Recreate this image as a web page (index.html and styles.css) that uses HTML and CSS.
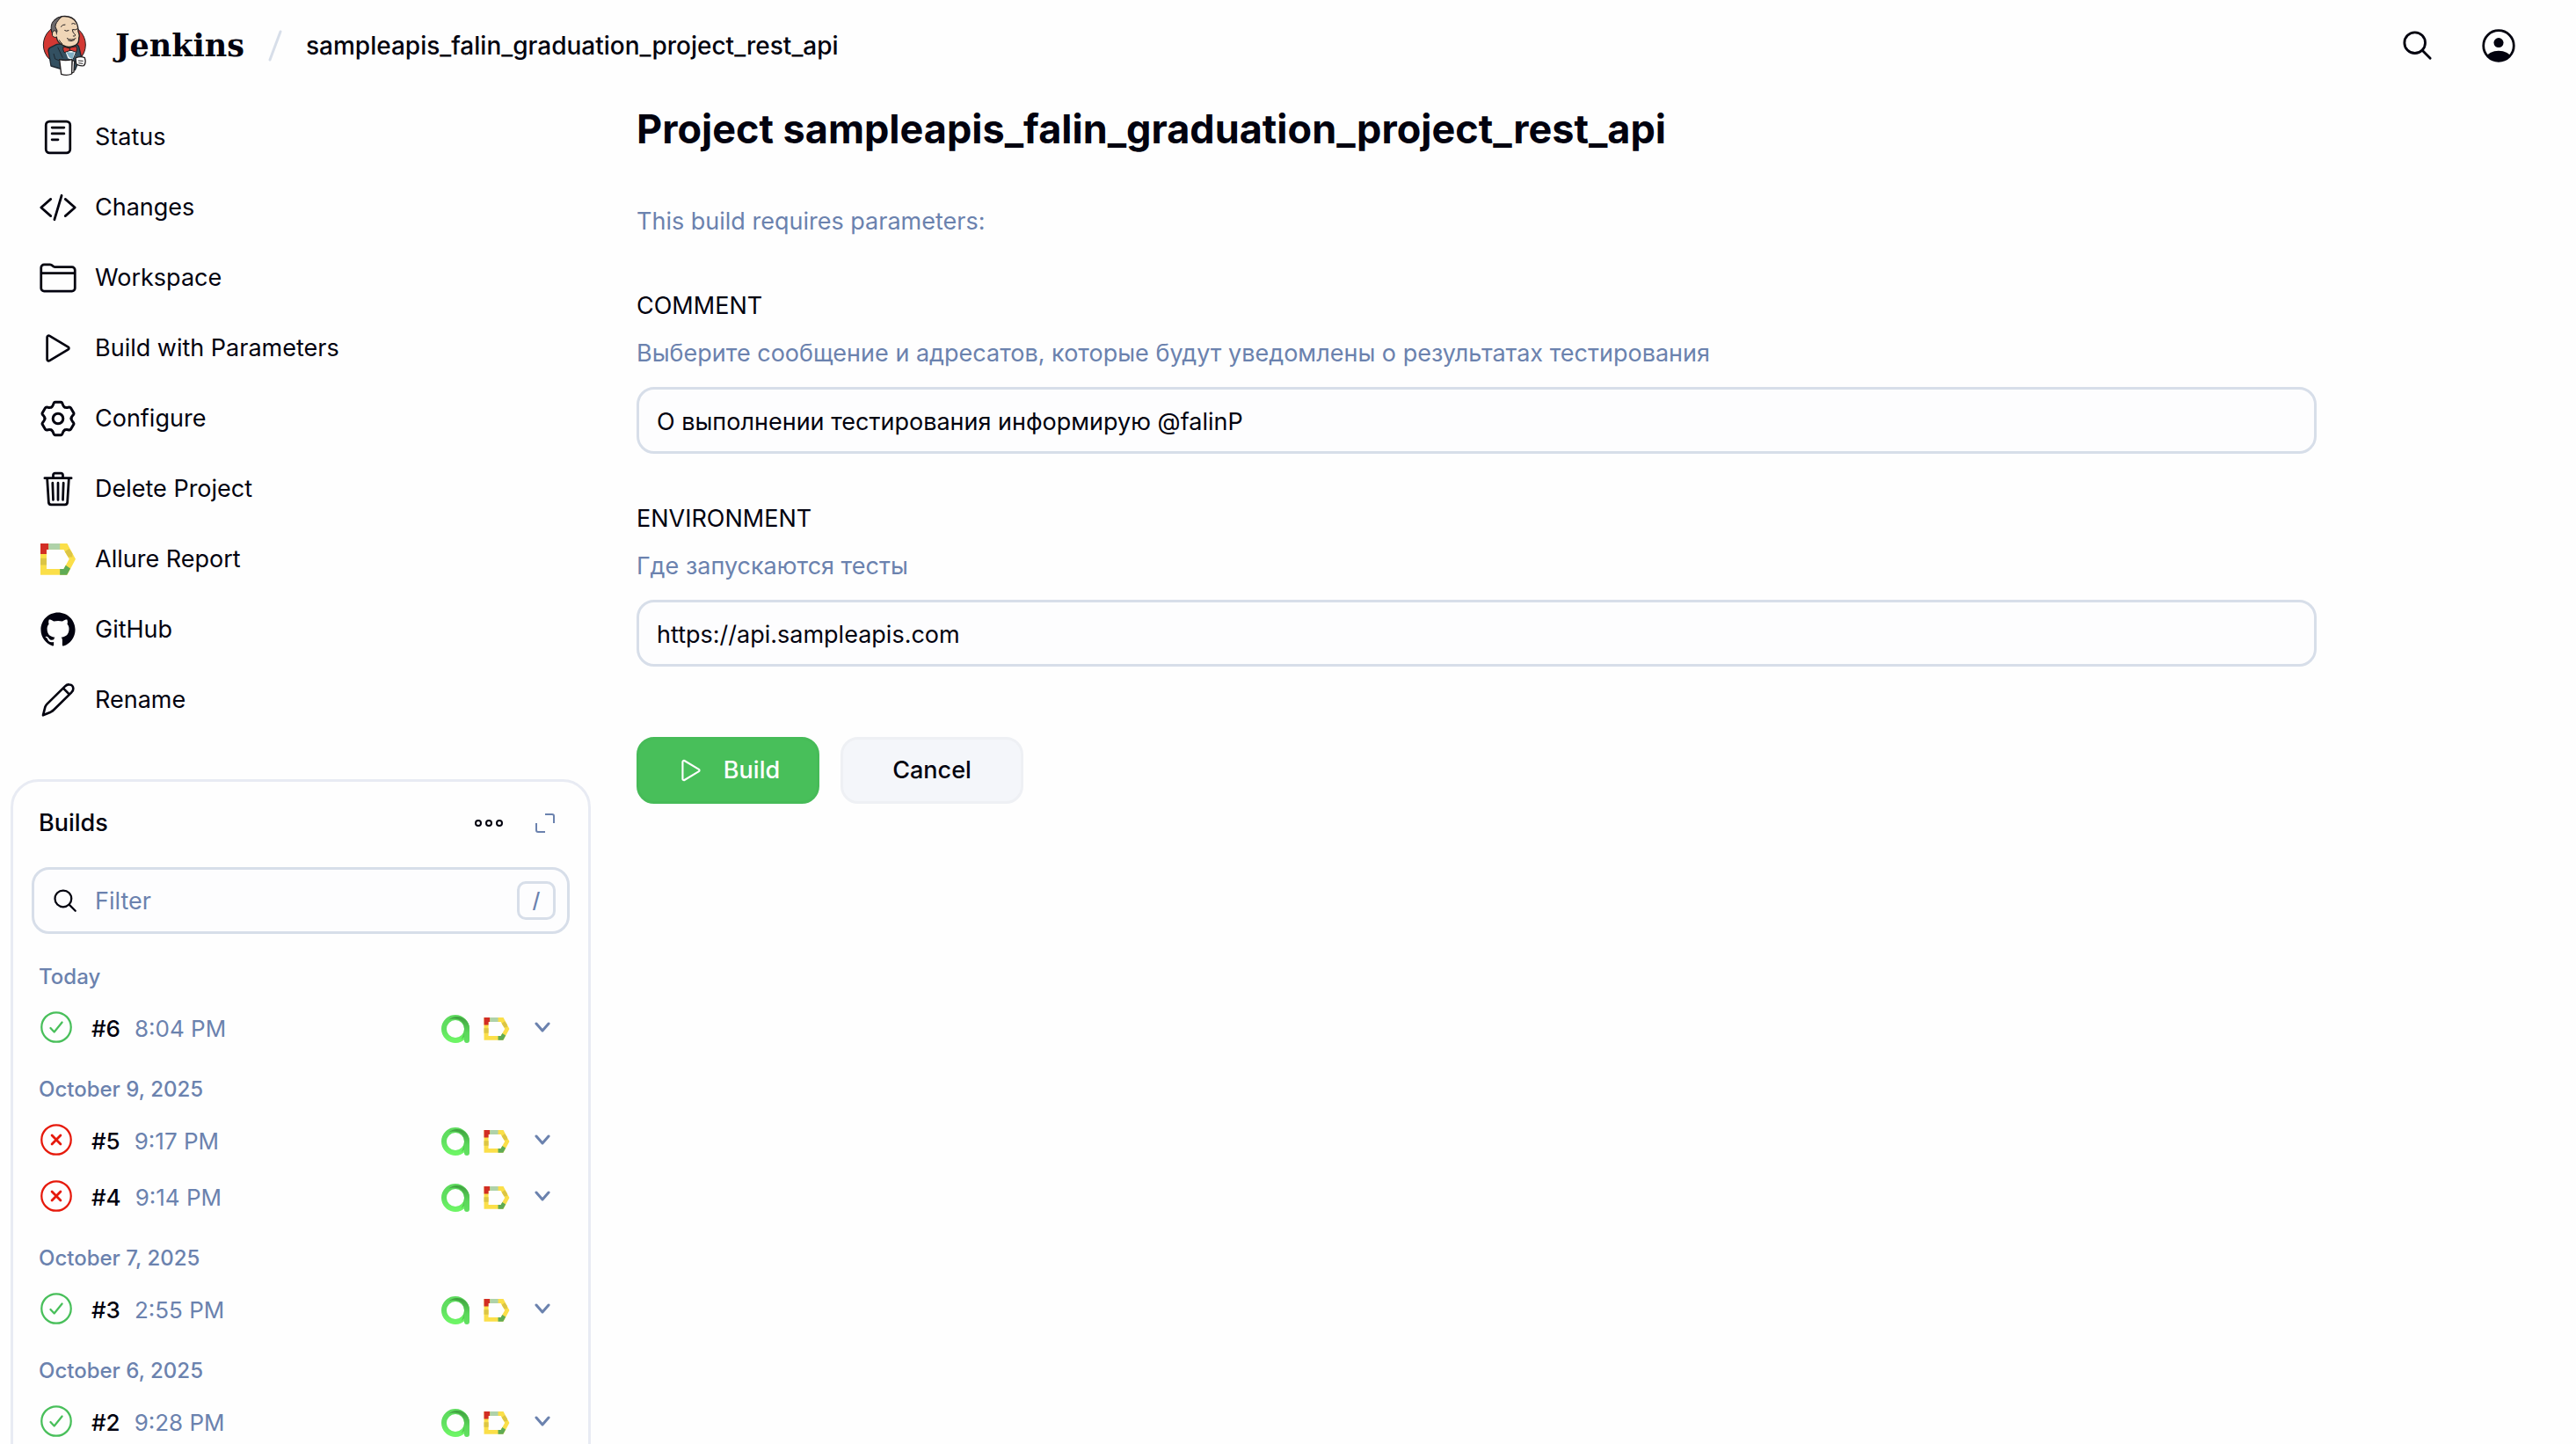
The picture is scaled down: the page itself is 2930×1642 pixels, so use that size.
FILE: index.html
```html
<!DOCTYPE html>
<html lang="en">
<head>
<meta charset="utf-8">
<title>sampleapis_falin_graduation_project_rest_api - Jenkins</title>
<link rel="stylesheet" href="styles.css">
</head>
<body>
<svg class="sprite" aria-hidden="true">
  <defs>
    <linearGradient id="ring" x1="0" y1="0" x2="0" y2="1">
      <stop offset="0" stop-color="#5edb5e"/><stop offset="0.5" stop-color="#60e060"/><stop offset="1" stop-color="#6df565"/>
    </linearGradient>
    <linearGradient id="stem" x1="0" y1="0" x2="0" y2="1">
      <stop offset="0" stop-color="#3f9f3f"/><stop offset="0.6" stop-color="#5bd75b"/><stop offset="1" stop-color="#62e062"/>
    </linearGradient>
    <clipPath id="face"><circle cx="486" cy="156" r="50"/></clipPath>
  </defs>
  <symbol id="allure" viewBox="137 174 121 109">
    <path fill="#fbdf49" fill-rule="evenodd" d="M137 174h92l29 54-29 54h-92zM158 195v67h59l19-34-19-33z"/>
    <path fill="#d22d24" d="M137 174h28v21h-7v15h-21z"/>
    <path fill="#afd2a9" d="M165 174h39v21h-39z"/>
    <path fill="#dcc544" d="M137 225h21v23h-21zM221 202l15-10 11 16v13h-14z"/>
    <path fill="#5fab54" d="M204 262h13l7-13 16 11-12 22h-24z"/>
  </symbol>
  <symbol id="testops" viewBox="69 75 96 96">
    <circle cx="117" cy="123" r="39" fill="none" stroke="url(#ring)" stroke-width="18"/>
    <path fill="url(#stem)" d="M94 92c20-22 71-12 71 30v40a9 9 0 0 1-18 0v-40c0-30-30-40-53-30z"/>
    <path fill="#53c94f" d="M147 128v22l-10 10q10-16 10-32z"/>
  </symbol>
  <symbol id="check" viewBox="0 0 512 512">
    <circle cx="256" cy="256" r="238" class="line"/>
    <path class="line" d="M350 178L223 334l-60-64"/>
  </symbol>
  <symbol id="cross" viewBox="0 0 512 512">
    <circle cx="256" cy="256" r="238" class="line"/>
    <path class="line thick" d="M326 186L186 326M186 186l140 140"/>
  </symbol>
  <symbol id="chevron" viewBox="0 0 18 12"><path class="line" d="M2 2l7 8 7-8"/></symbol>
  <symbol id="play" viewBox="0 0 512 512"><path class="line" d="M112 111v290c0 17.44 17 28.52 31 20.16l247.9-148.37c12.12-7.25 12.12-26.33 0-33.58L143 90.84c-14-8.36-31 2.72-31 20.16z"/></symbol>
  <symbol id="search" viewBox="0 0 36 36"><circle cx="14.500" cy="14.500" r="12.500" class="line"/><path class="line" d="M23.500 23.500L33 33"/></symbol>
</svg>

<header class="header">
  <a class="brand" href="#">
    <svg class="brand-logo" viewBox="54 50 153 210" aria-hidden="true">
      <ellipse cx="130" cy="152" rx="72" ry="70" fill="#d33833" stroke="#231f20" stroke-width="3"/>
      <path fill="#335061" stroke="#1d2730" stroke-width="4" stroke-linejoin="round" d="M104 150l-24 12q-7 4-4 14l8 48 30 9 52 5 12-30 10-12-8-34q-2-12-14-12l-16-4z"/>
      <path fill="#f7f7f7" d="M132 172l20-4 18 4-4 18-10 14-14-6z"/>
      <path fill="#81b0c4" d="M136 176l16 2 12-1-6 24-12-6z"/>
      <path fill="#f0d6b7" stroke="#231f20" stroke-width="4" d="M88 88Q92 60 122 55q34-4 48 20 7 12 7 32 6 12 2 22 2 22-19 27-18 8-34-2-22-10-23-29-16-2-15-20 0-12 4-17z"/>
      <path fill="#6d6b6d" stroke="#231f20" stroke-width="3" stroke-linejoin="round" d="M86 108q-5-24 6-37 12-13 30-16-13 10-18 20-6 8-5 16l6 13-3 14q-8-12-16-10z"/>
      <path fill="#f0d6b7" stroke="#231f20" stroke-width="3" d="M103 126q-14 2-15-10 0-12 8-13 8 0 7 11"/>
      <path fill="none" stroke="#231f20" stroke-width="3" stroke-linecap="round" d="M118 90q5-8 14-7M155 80q6-4 12 1M131 103q5 4 13 0M160 100q7 3 13-2M157 100q0 12 9 16 3 8-6 6M139 130q14 9 29 0M143 137q10 5 20-1M112 136q4 8 10 12"/>
      <path fill="#d33833" stroke="#231f20" stroke-width="3" stroke-linejoin="round" d="M126 158l22 6 4-3 18-4q6 9 0 20l-17-6-6 1-18 6q-6-9-3-20zM148 163v9"/>
      <path fill="#fff" stroke="#231f20" stroke-width="4" stroke-linejoin="round" d="M168 197q16-8 31-1 6 18-3 27-15 2-26-6zM156 205l8 2-2 38-10 4z"/>
      <path fill="none" stroke="#231f20" stroke-width="3" d="M177 206l17 1M178 214l15 2"/>
      <path fill="#fff" stroke="#231f20" stroke-width="4" stroke-linejoin="round" d="M113 202q21 5 43 0l-1 49q-17 8-36 1z"/>
      <path fill="none" stroke="#1d2730" stroke-width="3" d="M93 182l5 18 16 6M107 160l17 36M170 176l-10 24"/>
    </svg>
    <span class="brand-name">Jenkins</span>
  </a>
  <svg class="slash" viewBox="0 0 16 36" aria-hidden="true"><path d="M14 2L2 34"/></svg>
  <a class="crumb" href="#">sampleapis_falin_graduation_project_rest_api</a>
  <div class="header-actions">
    <button type="button" class="icon-button" aria-label="Search"><svg class="search-lg"><use href="#search"/></svg></button>
    <button type="button" class="icon-button" aria-label="User">
      <svg class="user" viewBox="431 101 110 110"><circle cx="486" cy="156" r="50" fill="none" stroke="currentColor" stroke-width="8"/><circle cx="486" cy="146" r="16" fill="currentColor"/><path clip-path="url(#face)" fill="currentColor" d="M436 212v-12q20-27 50-27t50 27v12z"/></svg>
    </button>
  </div>
</header>

<div class="layout">
  <aside class="sidebar">
    <nav class="tasks">
      <a class="task" href="#"><svg class="icon" viewBox="0 0 512 512"><rect class="line" x="96" y="48" width="320" height="416" rx="48"/><path class="line" d="M176 128h160M176 208h160M176 288h80"/></svg>Status</a>
      <a class="task" href="#"><svg class="icon" viewBox="0 0 512 512"><path class="line" d="M160 368L32 256l128-112M352 368l128-112-128-112M304 96l-96 320"/></svg>Changes</a>
      <a class="task" href="#"><svg class="icon" viewBox="0 0 512 512"><path class="line" d="M440 432H72a40 40 0 01-40-40V120a40 40 0 0140-40h75.890a40 40 0 0122.190 6.720l27.840 18.560a40 40 0 0022.190 6.720H440a40 40 0 0140 40v240a40 40 0 01-40 40zM32 192h448"/></svg>Workspace</a>
      <a class="task" href="#"><svg class="icon"><use href="#play"/></svg>Build with Parameters</a>
      <a class="task" href="#">
        <svg class="icon gear" viewBox="-22 -22 44 44">
          <defs><path id="tooth" d="M-7.500-13C-4.600-14.700-5.800-18.700-3.200-18.700H3.200C5.800-18.700 4.600-14.700 7.500-13"/></defs>
          <circle r="5.800"/><use href="#tooth"/><use href="#tooth" transform="rotate(60)"/><use href="#tooth" transform="rotate(120)"/><use href="#tooth" transform="rotate(180)"/><use href="#tooth" transform="rotate(240)"/><use href="#tooth" transform="rotate(300)"/>
        </svg>Configure</a>
      <a class="task" href="#"><svg class="icon" viewBox="0 0 512 512"><path class="line" d="M112 112l20 320c.950 18.490 14.400 32 32 32h184c17.670 0 30.870-13.510 32-32l20-320M80 112h352M192 112V72a23.930 23.930 0 0124-24h80a23.930 23.930 0 0124 24v40M256 176v224M184 176l8 224M328 176l-8 224"/></svg>Delete Project</a>
      <a class="task" href="#"><svg class="icon allure-lg"><use href="#allure"/></svg>Allure Report</a>
      <a class="task" href="#"><svg class="icon" viewBox="-1 -1 18 18"><path fill="currentColor" d="M8 0C3.580 0 0 3.580 0 8c0 3.540 2.290 6.530 5.470 7.590.4.070.55-.17.55-.38 0-.19-.01-.82-.01-1.490-2.010.37-2.530-.49-2.690-.94-.09-.23-.48-.94-.82-1.130-.28-.15-.68-.52-.01-.53.63-.01 1.080.58 1.230.82.72 1.210 1.870.87 2.330.66.070-.52.28-.87.51-1.070-1.780-.2-3.640-.89-3.640-3.950 0-.87.31-1.590.82-2.150-.08-.2-.36-1.020.08-2.120 0 0 .67-.21 2.200.82.64-.18 1.320-.27 2-.27s1.360.09 2 .27c1.530-1.040 2.200-.82 2.200-.82.44 1.100.16 1.920.08 2.120.51.56.82 1.270.82 2.150 0 3.070-1.870 3.750-3.650 3.950.29.25.54.73.54 1.480 0 1.070-.01 1.930-.01 2.200 0 .21.15.46.55.38A8.010 8.010 0 0016 8c0-4.420-3.580-8-8-8z"/></svg>GitHub</a>
      <a class="task" href="#"><svg class="icon pencil" viewBox="132 642 132 132"><path d="M147 760l7-28q2-6 7-11l61-60q7-7 14-6a14 14 0 0 1 14 14q0 8-6 13l-60 59q-5 5-11 8zM216 668l20 20"/></svg>Rename</a>
    </nav>

    <section class="builds">
      <div class="builds-head">
        <h2 class="builds-title">Builds</h2>
        <button type="button" class="icon-button" aria-label="More"><svg class="dots" viewBox="0 0 32 10"><circle cx="4" cy="5" r="3"/><circle cx="16" cy="5" r="3"/><circle cx="28" cy="5" r="3"/></svg></button>
        <a class="expand-link" href="#" aria-label="Expand"><svg class="expand" viewBox="0 0 24 24"><path d="M12 2h8q2 0 2 2v8M2 12v8q0 2 2 2h8"/></svg></a>
      </div>
      <label class="filter">
        <svg class="search-sm"><use href="#search"/></svg>
        <input class="filter-input" type="search" placeholder="Filter" aria-label="Filter">
        <kbd class="key">/</kbd>
      </label>

      <h3 class="day">Today</h3>
      <div class="build"><svg class="status ok"><use href="#check"/></svg><a class="num" href="#">#6</a><a class="time" href="#">8:04 PM</a><svg class="badge-a"><use href="#testops"/></svg><svg class="badge-d"><use href="#allure"/></svg><button type="button" class="icon-button" aria-label="Menu for #6"><svg class="chevron"><use href="#chevron"/></svg></button></div>
      <h3 class="day">October 9, 2025</h3>
      <div class="build"><svg class="status bad"><use href="#cross"/></svg><a class="num" href="#">#5</a><a class="time" href="#">9:17 PM</a><svg class="badge-a"><use href="#testops"/></svg><svg class="badge-d"><use href="#allure"/></svg><button type="button" class="icon-button" aria-label="Menu for #5"><svg class="chevron"><use href="#chevron"/></svg></button></div>
      <div class="build"><svg class="status bad"><use href="#cross"/></svg><a class="num" href="#">#4</a><a class="time" href="#">9:14 PM</a><svg class="badge-a"><use href="#testops"/></svg><svg class="badge-d"><use href="#allure"/></svg><button type="button" class="icon-button" aria-label="Menu for #4"><svg class="chevron"><use href="#chevron"/></svg></button></div>
      <h3 class="day">October 7, 2025</h3>
      <div class="build"><svg class="status ok"><use href="#check"/></svg><a class="num" href="#">#3</a><a class="time" href="#">2:55 PM</a><svg class="badge-a"><use href="#testops"/></svg><svg class="badge-d"><use href="#allure"/></svg><button type="button" class="icon-button" aria-label="Menu for #3"><svg class="chevron"><use href="#chevron"/></svg></button></div>
      <h3 class="day">October 6, 2025</h3>
      <div class="build"><svg class="status ok"><use href="#check"/></svg><a class="num" href="#">#2</a><a class="time" href="#">9:28 PM</a><svg class="badge-a"><use href="#testops"/></svg><svg class="badge-d"><use href="#allure"/></svg><button type="button" class="icon-button" aria-label="Menu for #2"><svg class="chevron"><use href="#chevron"/></svg></button></div>
    </section>
  </aside>

  <main class="main">
    <h1 class="title">Project sampleapis_falin_graduation_project_rest_api</h1>
    <p class="intro">This build requires parameters:</p>
    <form class="form">
      <div class="field">
        <label class="field-label" for="comment">COMMENT</label>
        <p class="help">Выберите сообщение и адресатов, которые будут уведомлены о результатах тестирования</p>
        <input class="text-input" id="comment" type="text" value="О выполнении тестирования информирую @falinP">
      </div>
      <div class="field">
        <label class="field-label" for="environment">ENVIRONMENT</label>
        <p class="help">Где запускаются тесты</p>
        <input class="text-input" id="environment" type="text" value="https://api.sampleapis.com">
      </div>
      <div class="actions">
        <button type="button" class="button primary"><svg class="button-icon"><use href="#play"/></svg>Build</button>
        <button type="button" class="button">Cancel</button>
      </div>
    </form>
  </main>
</div>
</body>
</html>
```
FILE: styles.css
```css
:root {
  --text: #02020f;
  --muted: #6b82ae;
  --border: #d7dee9;
  --green: #48bf5a;
  --red: #e6190b;
}

* { box-sizing: border-box; }

body {
  margin: 0;
  height: 100vh;
  display: flex;
  flex-direction: column;
  overflow: hidden;
  background: #fefefe;
  color: var(--text);
  font: 400 27px/40px Inter, "Liberation Sans", sans-serif;
}

h1, h2, h3, p { margin: 0; }
a { color: inherit; text-decoration: none; }
svg { display: block; flex: none; }
.sprite { position: absolute; width: 0; height: 0; }

.line {
  fill: none;
  stroke: currentColor;
  stroke-width: 32px;
  stroke-linecap: round;
  stroke-linejoin: round;
}

.icon-button {
  display: flex;
  padding: 0;
  border: 0;
  background: none;
  color: inherit;
}

/* Header */
.header {
  display: flex;
  align-items: center;
  flex: none;
  height: 104px;
  padding: 0 69px 0 48px;
}
.brand { display: flex; align-items: center; gap: 32px; }
.brand-logo { width: 51px; height: 70px; }
.brand-name { font: 700 35px/40px "DejaVu Serif", serif; }
.slash { width: 16px; height: 36px; margin: 0 27px; }
.slash path { fill: none; stroke: var(--border); stroke-width: 3px; stroke-linecap: round; }
.crumb { font-size: 28px; font-weight: 500; }
.header-actions { display: flex; align-items: center; gap: 56px; margin-left: auto; }
.search-lg { width: 34px; height: 34px; }
.user { width: 38px; height: 38px; }
#search .line { stroke-width: 3px; }
#chevron .line { stroke-width: 3px; }
.thick { stroke-width: 40px; }

.layout { display: flex; flex: 1; min-height: 0; }

/* Sidebar */
.sidebar { width: 672px; flex: none; padding: 12px 0 0 12px; }
.task {
  display: flex;
  align-items: center;
  gap: 20px;
  height: 80px;
  padding-left: 32px;
}
.icon { width: 44px; height: 44px; }
.allure-lg { padding: 4px 1px; }
.gear, .pencil { fill: none; stroke: currentColor; stroke-linejoin: round; stroke-linecap: round; }
.gear { stroke-width: 3px; }
.pencil { stroke-width: 8px; }

/* Builds card */
.builds {
  margin-top: 50px;
  padding: 21px;
  border: 3px solid #e8ebf3;
  border-radius: 32px;
}
.builds-head {
  display: flex;
  align-items: center;
  height: 52px;
  padding: 0 16px 0 8px;
}
.builds-title { flex: 1; font-size: 27px; font-weight: 500; }
.dots { width: 32px; height: 10px; fill: none; stroke: currentColor; stroke-width: 2px; }
.expand-link { margin-left: 36px; color: var(--muted); }
.expand { width: 24px; height: 24px; fill: none; stroke: currentColor; stroke-width: 2px; }
.filter {
  display: flex;
  align-items: center;
  gap: 20px;
  height: 76px;
  margin-top: 24px;
  padding: 0 13px 0 22px;
  border: 3px solid var(--border);
  border-radius: 20px;
  background: #fdfdfe;
}
.search-sm { width: 27px; height: 27px; }
.filter-input {
  flex: 1;
  min-width: 0;
  padding: 2px 0 0;
  border: 0;
  outline: 0;
  background: none;
  font: inherit;
  color: inherit;
}
.filter-input::placeholder { color: var(--muted); opacity: 1; }
.key {
  width: 44px;
  height: 44px;
  border: 3px solid var(--border);
  border-radius: 10px;
  color: var(--muted);
  font: 500 24px/38px Inter, sans-serif;
  text-align: center;
}
.day {
  height: 64px;
  padding: 19px 8px 0;
  color: var(--muted);
  font-size: 24px;
  font-weight: 500;
  line-height: 40px;
}
.filter + .day { margin-top: 10px; }
.build {
  display: flex;
  align-items: center;
  height: 64px;
  padding: 0 22px 0 10px;
  font-size: 26px;
}
.num, .time, .badge-a, .badge-d { margin-top: 4px; }
.status { width: 36px; height: 36px; margin-right: 22px; }
.ok { color: var(--green); }
.bad { color: var(--red); }
.num { font-weight: 500; margin-right: 16px; }
.time { flex: 1; color: var(--muted); }
.badge-a { width: 32px; height: 32px; margin-right: 16px; }
.badge-d { width: 30px; height: 26px; margin-right: 28px; }
.chevron { width: 18px; height: 12px; color: var(--muted); }

/* Main */
.main { flex: 1; min-width: 0; padding: 12px 295px 0 52px; }
.title { font-size: 45px; font-weight: 700; line-height: 62px; }
.intro { margin-top: 54px; color: var(--muted); }
.form { display: flex; flex-direction: column; margin-top: 56px; }
.field { display: flex; flex-direction: column; margin-bottom: 54px; }
.field-label { line-height: 40px; }
.help { margin-top: 14px; color: var(--muted); }
.text-input {
  width: 100%;
  height: 76px;
  margin-top: 18px;
  padding: 2px 20px 0;
  border: 3px solid var(--border);
  border-radius: 20px;
  background: #fdfdfe;
  color: inherit;
  font: inherit;
}
.actions { display: flex; gap: 24px; margin-top: 26px; }
.button {
  display: flex;
  align-items: center;
  justify-content: center;
  gap: 20px;
  width: 208px;
  height: 76px;
  border: 3px solid #eef0f4;
  border-radius: 20px;
  background: #f4f6fa;
  color: inherit;
  font: 500 27px/40px Inter, sans-serif;
}
.primary { border-color: #46bb58; background: var(--green); color: #fefefe; }
.button-icon { width: 34px; height: 34px; }
```
